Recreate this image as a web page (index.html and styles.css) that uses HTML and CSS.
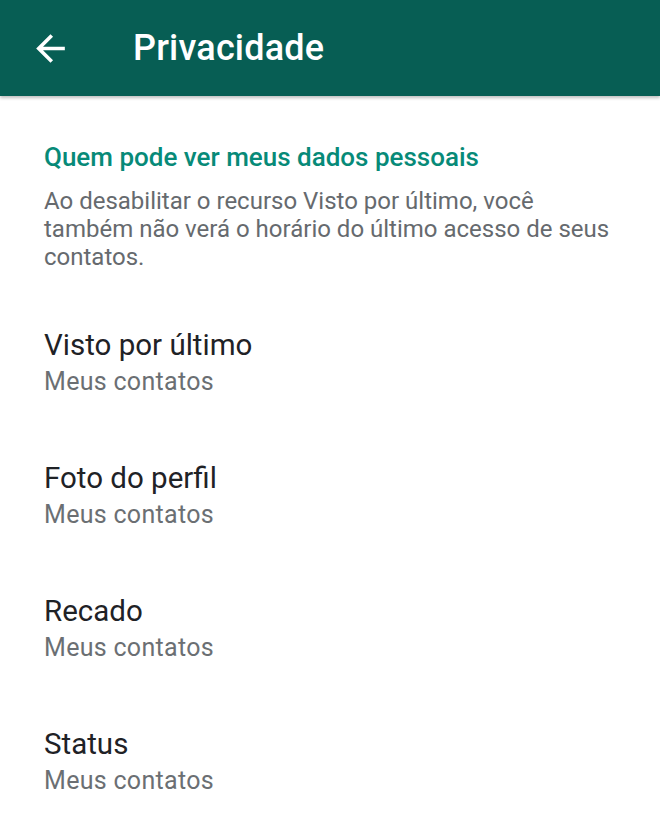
FILE: index.html
```html
<!DOCTYPE html>
<html lang="pt-BR">
<head>
  <meta charset="UTF-8">
  <meta name="viewport" content="width=device-width, initial-scale=1.0">
  <title>Privacidade</title>

  <link rel="stylesheet" href="styles.css">
</head>

<body>

<header class="app-bar">
  <button class="back-button" aria-label="Voltar">
    <svg viewBox="0 0 24 24" width="43" height="43">
      <path fill="#fff" d="M20 11H7.83l5.59-5.59L12 4l-8 8 8 8 1.41-1.41L7.83 13H20v-2z"/>
    </svg>
  </button>
  <h1 class="app-title">Privacidade</h1>
</header>

<main class="content">
  <section class="section">
    <h2 class="section-title">Quem pode ver meus dados pessoais</h2>
    <p class="section-desc">Ao desabilitar o recurso Visto por último, você<br>também não verá o horário do último acesso de seus contatos.</p>
  </section>

  <ul class="pref-list">
    <li class="pref-item">
      <span class="pref-title">Visto por último</span>
      <span class="pref-value">Meus contatos</span>
    </li>
    <li class="pref-item">
      <span class="pref-title">Foto do perfil</span>
      <span class="pref-value">Meus contatos</span>
    </li>
    <li class="pref-item">
      <span class="pref-title">Recado</span>
      <span class="pref-value">Meus contatos</span>
    </li>
    <li class="pref-item">
      <span class="pref-title">Status</span>
      <span class="pref-value">Meus contatos</span>
    </li>
  </ul>
</main>

</body>
</html>
```

FILE: styles.css
```css
body {
  margin: 0;
  background-color: #fff;
  font-family: Roboto, "Noto Sans", sans-serif;
}

.app-bar {
  display: flex;
  align-items: center;
  height: 96px;
  background-color: #075e54;
  box-shadow: 0 2px 3px rgba(0, 0, 0, 0.25);
}

.back-button {
  display: flex;
  align-items: center;
  justify-content: center;
  width: 43px;
  height: 43px;
  margin-left: 29px;
  padding: 0;
  background: none;
  border: none;
}

.app-title {
  margin: 0 0 0 61px;
  color: #fff;
  font-size: 36px;
  font-weight: 500;
  letter-spacing: 0.2px;
}

.content {
  padding: 0 44px;
}

.section {
  padding-top: 40px;
}

.section-title {
  margin: 0;
  color: #078a78;
  font-size: 26px;
  font-weight: 500;
  line-height: 42px;
}

.section-desc {
  margin: 9px 0 0;
  color: #666a6e;
  font-size: 24px;
  line-height: 28px;
}

.pref-list {
  list-style: none;
  margin: 0;
  padding: 56px 0 0;
}

.pref-item {
  display: flex;
  flex-direction: column;
  height: 133px;
}

.pref-title {
  color: #1f2226;
  font-size: 29.5px;
  line-height: 36px;
}

.pref-value {
  color: #6b6f73;
  font-size: 25px;
  line-height: 38px;
  letter-spacing: 0.3px;
}
```
